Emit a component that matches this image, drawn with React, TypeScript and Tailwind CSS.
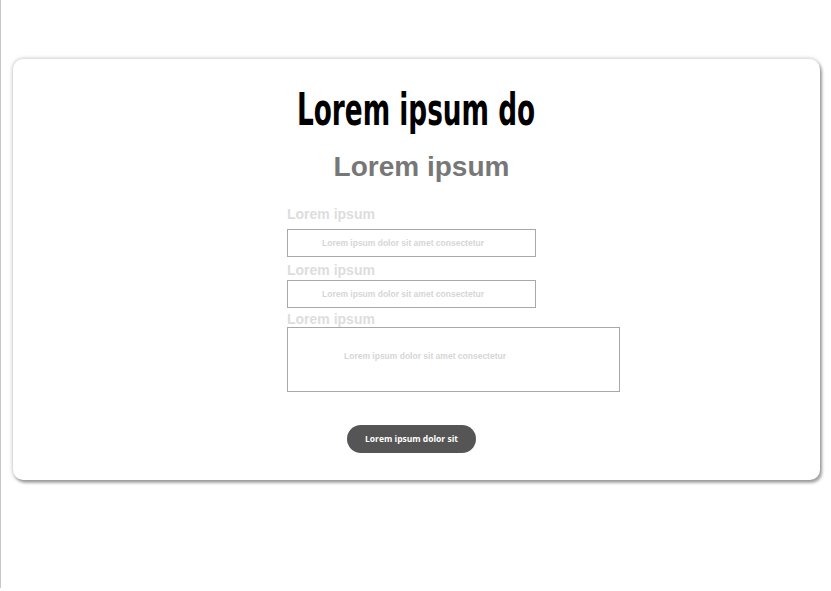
const PLACEHOLDER = 'Lorem ipsum dolor sit amet consectetur'

function Label({ className = '' }: { className?: string }) {
  return <label className={`text-[14px] leading-[14px] font-bold text-[#dddddd] ${className}`}>Lorem ipsum</label>
}

export default function App() {
  return (
    <div className="h-[591px] w-[831px] bg-white font-['Liberation_Sans',Arial,sans-serif]">
      <div className="h-[588px] border-l border-[#c8c8c8] pl-[12px] pt-[59px] pr-[11px]">
        {/* Card */}
        <div className="flex h-[421px] flex-col items-center rounded-[10px] bg-white shadow-[2px_3px_3px_rgba(0,0,0,0.3),0_0_4px_rgba(0,0,0,0.3)]">
          <h1 className="mt-[26px] origin-center scale-x-[0.665] font-['DejaVu_Sans_Condensed',sans-serif] text-[44px] leading-[50px] font-bold whitespace-nowrap text-black">
            Lorem ipsum do
          </h1>
          <h2 className="mt-[16px] ml-[10px] text-[28px] leading-[32px] font-bold text-[#777777]">
            Lorem ipsum
          </h2>

          {/* Form */}
          <div className="mt-[24px] ml-[274px] flex w-[333px] flex-col self-start">
            <Label />
            <div className="mt-[8px] flex h-[28px] w-[249px] items-center border border-[#a8a8a8] pl-[34px] text-[8.5px] font-bold text-[#d6d6d6]">
              {PLACEHOLDER}
            </div>
            <Label className="mt-[6px]" />
            <div className="mt-[3px] flex h-[28px] w-[249px] items-center border border-[#a8a8a8] pl-[34px] text-[8.5px] font-bold text-[#d6d6d6]">
              {PLACEHOLDER}
            </div>
            <Label className="mt-[4px]" />
            <div className="mt-[1px] h-[65px] w-[333px] border border-[#a8a8a8] pt-[22px] pl-[56px] text-[8.5px] font-bold text-[#d6d6d6]">
              {PLACEHOLDER}
            </div>
            <div className="flex w-[249px] justify-center">
              <button className="mt-[33px] h-[28px] w-[129px] rounded-full bg-[#555555] font-['Open_Sans',sans-serif] text-[8.5px] font-bold text-white">
                Lorem ipsum dolor sit
              </button>
            </div>
          </div>
        </div>
      </div>
    </div>
  )
}
